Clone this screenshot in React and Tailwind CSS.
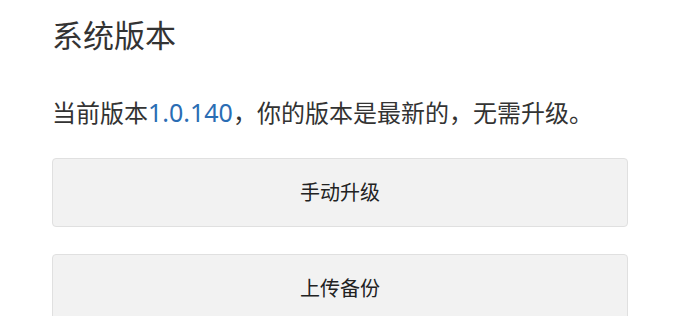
import React from "react";

const FONT = { fontFamily: '"Noto Sans", "Noto Sans CJK SC", sans-serif' };

export default function App() {
  const buttons = ["手动升级", "上传备份"];

  return (
    <div className="min-h-screen bg-white" style={FONT}>
      <div className="ml-[52px] w-[576px] pt-[18px]">
        {/* title */}
        <h3 className="text-[31px] leading-[34px] text-[#333]">系统版本</h3>

        {/* version line */}
        <p className="mt-[43px] text-[24px] leading-[35px] text-[#333]">
          当前版本<span className="text-[25px] text-[#2a6db4]">1.0.140</span>，你的版本是最新的，无需升级。
        </p>

        {/* actions */}
        <div className="mt-[28px] flex flex-col gap-[27px]">
          {buttons.map((b) => (
            <button
              key={b}
              className="h-[69px] w-full rounded-[4px] border border-[#e0e0e0] bg-[#f2f2f2] text-[20px] text-[#222]"
            >
              {b}
            </button>
          ))}
        </div>
      </div>
    </div>
  );
}
